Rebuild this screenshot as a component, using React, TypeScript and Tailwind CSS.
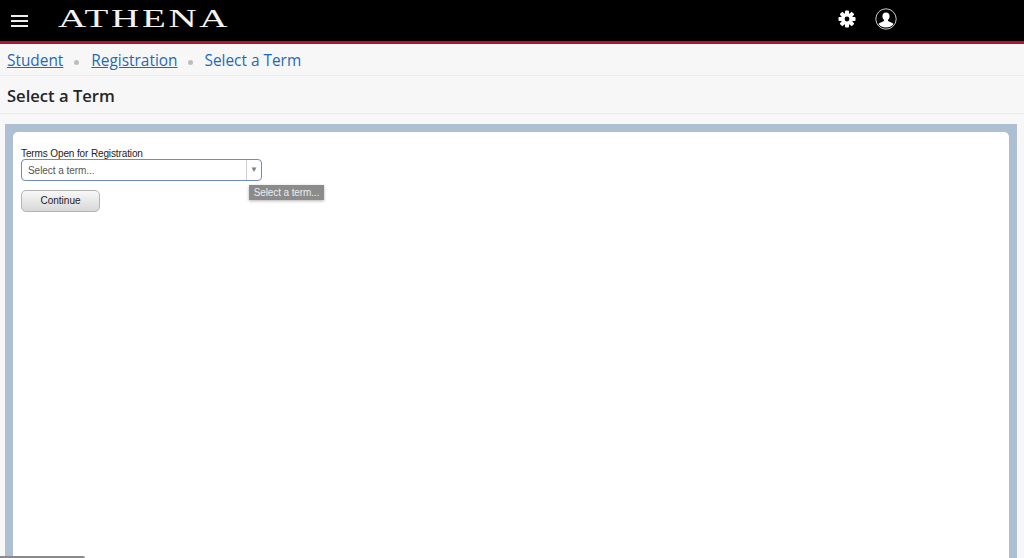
import * as React from "react";

const GearIcon = () => (
  <svg width="18" height="18" viewBox="0 0 18 18" className="block">
    <g fill="#fff">
      <rect x="7" y="0.5" width="4" height="17" rx="0.8" />
      <rect x="7" y="0.5" width="4" height="17" rx="0.8" transform="rotate(45 9 9)" />
      <rect x="7" y="0.5" width="4" height="17" rx="0.8" transform="rotate(90 9 9)" />
      <rect x="7" y="0.5" width="4" height="17" rx="0.8" transform="rotate(135 9 9)" />
      <circle cx="9" cy="9" r="6" />
    </g>
    <circle cx="9" cy="9" r="2.4" fill="#000" />
  </svg>
);

const UserIcon = () => (
  <svg width="22" height="22" viewBox="0 0 22 22" className="block">
    <circle cx="11" cy="11" r="10.2" fill="#000" stroke="#c9c9c9" strokeWidth="1" />
    <path
      d="M11 4.4c-2.300 0-3.600 1.700-3.600 3.800 0 1.500.6 2.800 1.600 3.600v1.200l-4.300 2c-.6.3-1 .7-1.100 1.200a9.900 9.900 0 0 0 14.800 0c-.1-.5-.5-.9-1.100-1.200l-4.300-2v-1.200c1-.8 1.600-2.100 1.600-3.600 0-2.100-1.300-3.800-3.600-3.800z"
      fill="#fff"
    />
  </svg>
);

const Dot = () => <span className="mt-[3px] h-[5px] w-[5px] rounded-full bg-[#bdbdbd]" />;

export default function App() {
  return (
    <div className="relative flex h-[558px] w-[1024px] flex-col overflow-hidden bg-[#f7f7f7] font-['Liberation_Sans',sans-serif]">
      <header className="flex h-[44px] shrink-0 items-center border-b-[3px] border-[#b5122b] bg-black">
        <div className="ml-[11px] flex w-[17px] flex-col gap-[3px]">
          <span className="h-[2px] bg-[#eeeeee]" />
          <span className="h-[2px] bg-[#eeeeee]" />
          <span className="h-[2px] bg-[#eeeeee]" />
        </div>
        <div className="ml-[30px] w-[170px] origin-left scale-x-[1.5] pb-[4px] font-['Liberation_Serif',serif] text-[26px] leading-none tracking-[1.8px] text-[#f2f2f2]">
          ATHENA
        </div>
        <div className="ml-auto mr-[127px] flex items-center gap-[19px] pb-[3px]">
          <GearIcon />
          <UserIcon />
        </div>
      </header>

      <nav className="flex h-[32px] shrink-0 items-center gap-[11px] border-b border-[#ececec] pl-[7px] pt-[2px] font-['Open_Sans',sans-serif] text-[15.4px] text-[#1e6ab8]">
        <span className="underline">Student</span>
        <Dot />
        <span className="ml-[1px] underline">Registration</span>
        <Dot />
        <span>Select a Term</span>
      </nav>

      <div className="flex h-[38px] shrink-0 items-center border-b border-[#ececec] pl-[7px] pt-[4px] font-['Open_Sans',sans-serif] text-[16.6px] font-semibold text-[#262626]">
        Select a Term
      </div>

      <main className="mx-[5px] mt-[10px] flex w-[1012px] flex-1 flex-col bg-[#aebfd1] px-[8px] pt-[8px]">
        <div className="flex-1 rounded-t-[5px] bg-white pl-[8px] pt-[16px]">
          <div className="text-[10px] leading-[11px] tracking-[-0.12px] text-[#222222]">
            Terms Open for Registration
          </div>
          <div className="relative w-[241px]">
            <div className="flex h-[22px] items-center rounded-[4px] border border-[#6d8cc4] bg-white text-[10px] tracking-[-0.05px] text-[#555555]">
              <span className="flex-1 pl-[6px]">Select a term...</span>
              <span className="flex h-full w-[15px] items-center justify-center border-l border-[#cfcfcf] text-[8px] text-[#808080]">
                ▼
              </span>
            </div>
            <div className="absolute left-[228px] top-[26px] flex h-[15px] w-[75px] items-center justify-center bg-[#8b8b8b] text-[10px] tracking-[-0.1px] text-[#ececec] shadow-[0_1px_3px_rgba(0,0,0,0.3)]">
              Select a term...
            </div>
          </div>
          <button className="mt-[9px] flex h-[22px] w-[79px] items-center justify-center rounded-[5px] border border-[#b4b4b4] bg-gradient-to-b from-[#f8f8f8] to-[#d8d8d8] pb-[1px] text-[10px] text-[#222222]">
            Continue
          </button>
        </div>
      </main>

      <div className="absolute bottom-0 left-0 h-[2px] w-[85px] rounded-tr-[2px] bg-[#8a8a8a]" />
    </div>
  );
}
